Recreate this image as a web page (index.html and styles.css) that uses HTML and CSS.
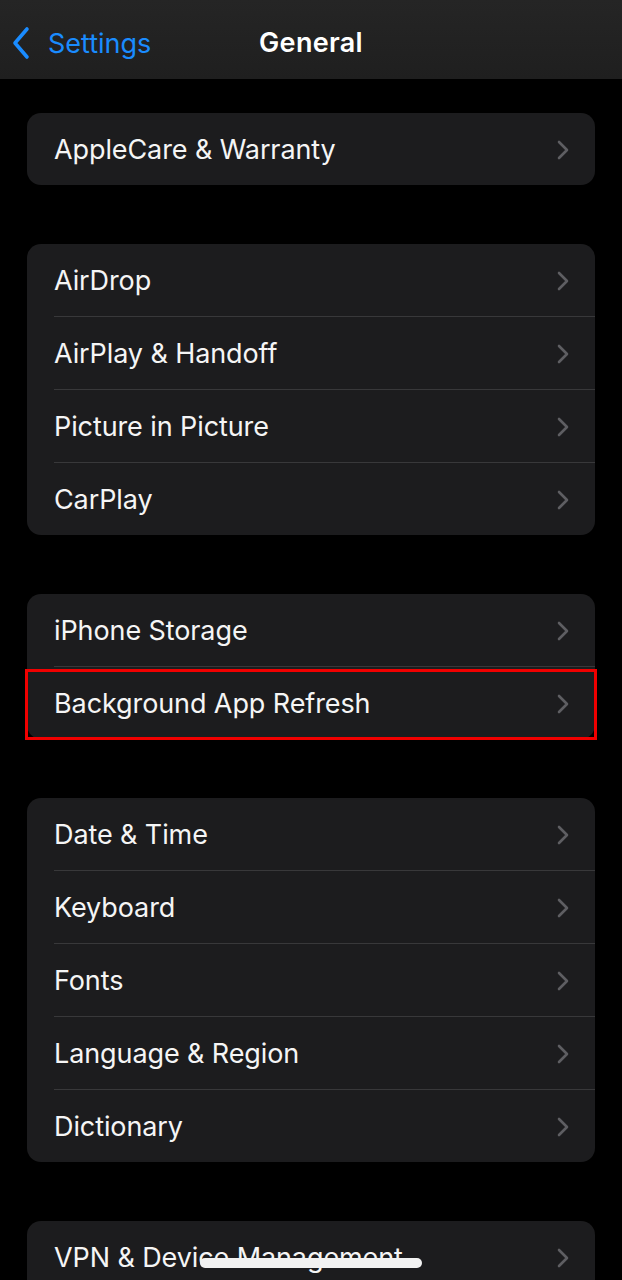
FILE: index.html
```html
<!DOCTYPE html>
<html>
<head>
<meta charset="utf-8">
<link rel="stylesheet" href="styles.css">
</head>
<body>
<div class="screen">
  <header class="nav">
    <div class="back">
      <svg class="back-icon" width="18" height="34" viewBox="0 0 18 34"><path d="M15 3 L3 17 L15 31" fill="none" stroke="#1a8cff" stroke-width="3.6" stroke-linecap="round" stroke-linejoin="round"/></svg>
      <span class="back-label">Settings</span>
    </div>
    <div class="title">General</div>
  </header>

  <main class="content">
    <section class="group">
      <div class="row"><span class="label">AppleCare &amp; Warranty</span><svg class="chev" width="14" height="22" viewBox="0 0 14 22"><path d="M3 3 L11 11 L3 19" fill="none" stroke="#5e5e62" stroke-width="2.6" stroke-linecap="round" stroke-linejoin="round"/></svg></div>
    </section>

    <section class="group">
      <div class="row"><span class="label">AirDrop</span><svg class="chev" width="14" height="22" viewBox="0 0 14 22"><path d="M3 3 L11 11 L3 19" fill="none" stroke="#5e5e62" stroke-width="2.6" stroke-linecap="round" stroke-linejoin="round"/></svg></div>
      <div class="row"><span class="label">AirPlay &amp; Handoff</span><svg class="chev" width="14" height="22" viewBox="0 0 14 22"><path d="M3 3 L11 11 L3 19" fill="none" stroke="#5e5e62" stroke-width="2.6" stroke-linecap="round" stroke-linejoin="round"/></svg></div>
      <div class="row"><span class="label">Picture in Picture</span><svg class="chev" width="14" height="22" viewBox="0 0 14 22"><path d="M3 3 L11 11 L3 19" fill="none" stroke="#5e5e62" stroke-width="2.6" stroke-linecap="round" stroke-linejoin="round"/></svg></div>
      <div class="row"><span class="label">CarPlay</span><svg class="chev" width="14" height="22" viewBox="0 0 14 22"><path d="M3 3 L11 11 L3 19" fill="none" stroke="#5e5e62" stroke-width="2.6" stroke-linecap="round" stroke-linejoin="round"/></svg></div>
    </section>

    <section class="group">
      <div class="row"><span class="label">iPhone Storage</span><svg class="chev" width="14" height="22" viewBox="0 0 14 22"><path d="M3 3 L11 11 L3 19" fill="none" stroke="#5e5e62" stroke-width="2.6" stroke-linecap="round" stroke-linejoin="round"/></svg></div>
      <div class="row highlighted"><span class="label">Background App Refresh</span><svg class="chev" width="14" height="22" viewBox="0 0 14 22"><path d="M3 3 L11 11 L3 19" fill="none" stroke="#5e5e62" stroke-width="2.6" stroke-linecap="round" stroke-linejoin="round"/></svg></div>
    </section>

    <section class="group">
      <div class="row"><span class="label">Date &amp; Time</span><svg class="chev" width="14" height="22" viewBox="0 0 14 22"><path d="M3 3 L11 11 L3 19" fill="none" stroke="#5e5e62" stroke-width="2.6" stroke-linecap="round" stroke-linejoin="round"/></svg></div>
      <div class="row"><span class="label">Keyboard</span><svg class="chev" width="14" height="22" viewBox="0 0 14 22"><path d="M3 3 L11 11 L3 19" fill="none" stroke="#5e5e62" stroke-width="2.6" stroke-linecap="round" stroke-linejoin="round"/></svg></div>
      <div class="row"><span class="label">Fonts</span><svg class="chev" width="14" height="22" viewBox="0 0 14 22"><path d="M3 3 L11 11 L3 19" fill="none" stroke="#5e5e62" stroke-width="2.6" stroke-linecap="round" stroke-linejoin="round"/></svg></div>
      <div class="row"><span class="label">Language &amp; Region</span><svg class="chev" width="14" height="22" viewBox="0 0 14 22"><path d="M3 3 L11 11 L3 19" fill="none" stroke="#5e5e62" stroke-width="2.6" stroke-linecap="round" stroke-linejoin="round"/></svg></div>
      <div class="row"><span class="label">Dictionary</span><svg class="chev" width="14" height="22" viewBox="0 0 14 22"><path d="M3 3 L11 11 L3 19" fill="none" stroke="#5e5e62" stroke-width="2.6" stroke-linecap="round" stroke-linejoin="round"/></svg></div>
    </section>

    <section class="group">
      <div class="row"><span class="label">VPN &amp; Device Management</span><svg class="chev" width="14" height="22" viewBox="0 0 14 22"><path d="M3 3 L11 11 L3 19" fill="none" stroke="#5e5e62" stroke-width="2.6" stroke-linecap="round" stroke-linejoin="round"/></svg></div>
    </section>
  </main>

  <div class="home-indicator"></div>
</div>
</body>
</html>
```

FILE: styles.css
```css
* { box-sizing: border-box; }
html, body {
  margin: 0;
  padding: 0;
  background: #000;
}
.screen {
  position: relative;
  width: 622px;
  height: 1280px;
  overflow: hidden;
  background: #000;
  font-family: Inter, "Noto Sans", sans-serif;
  color: #fff;
}
.nav {
  position: relative;
  height: 79px;
  background: linear-gradient(180deg, #252525 0%, #1f1f1f 100%);
  display: flex;
  align-items: center;
  justify-content: center;
  padding-top: 6px;
}
.back {
  position: absolute;
  left: 12px;
  top: 26px;
  display: flex;
  align-items: center;
  gap: 18px;
}
.back-label {
  color: #1a8cff;
  font-size: 27px;
  letter-spacing: 0;
}
.title {
  font-size: 27px;
  font-weight: 600;
  letter-spacing: 0.3px;
}
.content {
  padding: 34px 27px 0;
  display: flex;
  flex-direction: column;
  gap: 59px;
}
.group {
  background: #1c1c1e;
  border-radius: 14px;
}
.row {
  position: relative;
  height: 72px;
  display: flex;
  align-items: center;
  justify-content: space-between;
  padding: 1px 25px 0 27px;
}
.row + .row {
  height: 73px;
  border-top: 1px solid #38383a;
  margin-left: 27px;
  padding-left: 0;
}
.label {
  font-size: 27px;
  letter-spacing: -0.1px;
  color: #f5f5f5;
}
.chev { display: block; }
.highlighted::after {
  content: "";
  position: absolute;
  left: -29px;
  right: -2px;
  top: 2px;
  bottom: -1px;
  border: 3px solid #f00000;
}
.home-indicator {
  position: absolute;
  left: 200px;
  width: 222px;
  bottom: 12px;
  height: 10px;
  border-radius: 5px;
  background: #f2f2f2;
}
```
